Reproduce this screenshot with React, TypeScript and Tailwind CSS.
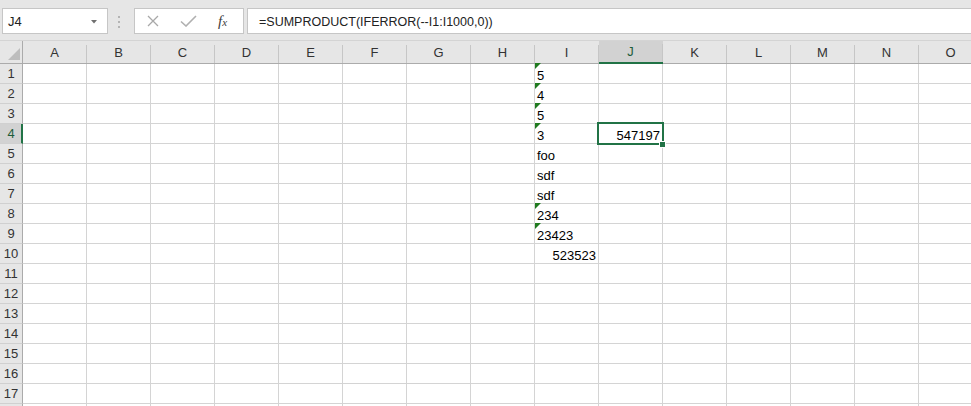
import clsx from "clsx";

const COLS = ["A", "B", "C", "D", "E", "F", "G", "H", "I", "J", "K", "L", "M", "N", "O"];
const ROW_COUNT = 18;

type CellData = { v: string; right?: boolean; tri?: boolean };

const DATA: Record<string, CellData> = {
  I1: { v: "5", tri: true },
  I2: { v: "4", tri: true },
  I3: { v: "5", tri: true },
  I4: { v: "3", tri: true },
  I5: { v: "foo" },
  I6: { v: "sdf" },
  I7: { v: "sdf" },
  I8: { v: "234", tri: true },
  I9: { v: "23423", tri: true },
  I10: { v: "523523", right: true },
  J4: { v: "547197", right: true },
};

const SEL_COL = "J";
const SEL_ROW = 4;

function FormulaBar() {
  return (
    <div className="flex h-[41px] items-start border-b border-[#d4d4d4] bg-[#e6e6e6] pt-2">
      <div className="ml-[2px] flex h-[26px] w-[106px] shrink-0 items-center justify-between border border-[#c6c6c6] bg-white pl-[5px] pr-[10px] pt-[2px] text-[13px] text-[#222]">
        <span>J4</span>
        <svg width="6" height="4" viewBox="0 0 6 4">
          <path d="M0 0H6L3 3.5Z" fill="#707070" />
        </svg>
      </div>
      <div className="ml-[10px] mt-[8px] flex flex-col gap-[3px]">
        <span className="h-[2px] w-[2px] bg-[#b4b4b4]" />
        <span className="h-[2px] w-[2px] bg-[#b4b4b4]" />
        <span className="h-[2px] w-[2px] bg-[#b4b4b4]" />
      </div>
      <div className="ml-[14px] flex h-[26px] w-[110px] shrink-0 items-center border border-[#c6c6c6] bg-white pl-[12px]">
        <svg width="12" height="12" viewBox="0 0 12 12">
          <path d="M1 1L11 11M11 1L1 11" stroke="#a8a8a8" strokeWidth="1.3" />
        </svg>
        <svg className="ml-[21px]" width="17" height="12" viewBox="0 0 17 12">
          <path d="M1 6.5L6 11L16 1" stroke="#b0b0b0" strokeWidth="1.6" fill="none" />
        </svg>
        <span className="ml-[21px] font-['Liberation_Serif',serif] text-[15px] italic leading-none text-[#404040]">
          f<span className="text-[11px]">x</span>
        </span>
      </div>
      <div className="ml-[3px] flex h-[26px] w-[740px] shrink-0 items-center border border-[#c6c6c6] bg-white pl-[11px] pt-[2px] text-[12.5px] text-[#222]">
        =SUMPRODUCT(IFERROR(--I1:I1000,0))
      </div>
    </div>
  );
}

function HeaderRow() {
  return (
    <div className="flex h-[23px] bg-[#e6e6e6] text-[13px] text-[#333]">
      <div className="flex w-[23px] shrink-0 items-end justify-end border-b border-r border-[#ababab] pb-[3px] pr-[2px]">
        <svg width="12" height="12" viewBox="0 0 12 12">
          <path d="M12 0V12H0Z" fill="#bdbdbd" />
        </svg>
      </div>
      {COLS.map((c) => (
        <div
          key={c}
          className={clsx(
            "flex w-16 shrink-0",
            c === SEL_COL
              ? "border-b-2 border-[#217346] bg-[#d2d2d2] text-[#1e5c3a]"
              : "border-b border-[#ababab]"
          )}
        >
          <span className="flex flex-1 items-center justify-center pt-[1px]">{c}</span>
          <span className="h-[18px] w-px self-end bg-[#c6c6c6]" />
        </div>
      ))}
    </div>
  );
}

function Cell({ id }: { id: string }) {
  const d = DATA[id];
  const selected = id === `${SEL_COL}${SEL_ROW}`;
  return (
    <div
      className={clsx(
        "relative flex h-full w-16 shrink-0 items-end border-b border-r border-[#d4d4d4]",
        d?.right ? "justify-end pr-[2px]" : "pl-[2px]"
      )}
    >
      {d?.tri && (
        <svg className="absolute -top-px left-0" width="6" height="6" viewBox="0 0 6 6">
          <path d="M0 0H6L0 6Z" fill="#1f7a1f" />
        </svg>
      )}
      {d && <span className="whitespace-nowrap leading-[15px]">{d.v}</span>}
      {selected && (
        <div className="absolute -bottom-[2px] -left-[2px] -right-[2px] -top-[2px] z-10 border-2 border-[#217346]">
          <div className="absolute -bottom-[5px] -right-[4px] h-[7px] w-[7px] border border-white bg-[#217346]" />
        </div>
      )}
    </div>
  );
}

function Row({ n }: { n: number }) {
  const sel = n === SEL_ROW;
  // the last row only peeks in at the bottom edge, its number is not visible
  const label = n < ROW_COUNT ? n : "";
  return (
    <div className="flex h-5">
      <div
        className={clsx(
          "flex w-[23px] shrink-0 items-center justify-center border-b border-b-[#d0d0d0] pt-[1px] text-[13px]",
          sel
            ? "border-r-2 border-r-[#217346] bg-[#d2d2d2] pl-[1px] text-[#1e5c3a]"
            : "border-r border-r-[#ababab] bg-[#e6e6e6] text-[#333]"
        )}
      >
        {label}
      </div>
      {COLS.map((c) => (
        <Cell key={c} id={`${c}${n}`} />
      ))}
    </div>
  );
}

export default function App() {
  return (
    <div className="h-[406px] w-[971px] overflow-hidden bg-white font-['Liberation_Sans',Arial,sans-serif] text-[13px] text-black">
      <FormulaBar />
      <HeaderRow />
      {Array.from({ length: ROW_COUNT }, (_, i) => (
        <Row key={i} n={i + 1} />
      ))}
    </div>
  );
}
